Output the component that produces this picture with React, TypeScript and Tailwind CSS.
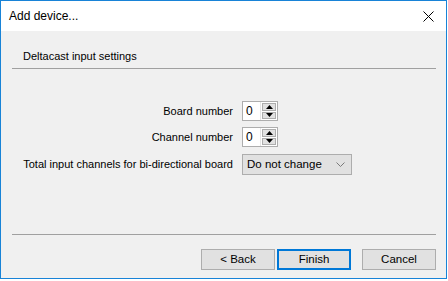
const FONT = { fontFamily: '"Segoe UI", "Liberation Sans", Arial, sans-serif' };

function SpinBox({ value }: { value: string }) {
  return (
    <div className="flex h-[20px] w-[36px] border border-[#adadad] bg-white">
      <div className="flex w-[18px] items-center border-r border-[#e5e5e5] pl-[3px] text-[12px] leading-none text-black">
        {value}
      </div>
      <div className="flex flex-1 flex-col gap-[1px] p-[1px]">
        <div className="flex flex-1 items-center justify-center border border-[#adadad] bg-[#e1e1e1]">
          <svg width="7" height="4" viewBox="0 0 7 4">
            <path d="M3.5 0 L7 4 L0 4 Z" fill="#000" />
          </svg>
        </div>
        <div className="flex flex-1 items-center justify-center border border-[#adadad] bg-[#e1e1e1]">
          <svg width="7" height="4" viewBox="0 0 7 4">
            <path d="M0 0 L7 0 L3.5 4 Z" fill="#000" />
          </svg>
        </div>
      </div>
    </div>
  );
}

function Button({ label, primary }: { label: string; primary?: boolean }) {
  return (
    <button
      className={
        'h-[21px] w-[74px] bg-[#e1e1e1] text-[11.5px] leading-none text-black ' +
        (primary ? 'border-2 border-[#0078d7]' : 'border border-[#adadad]')
      }
    >
      {label}
    </button>
  );
}

export default function App() {
  return (
    <div className="h-[281px] w-[448px] bg-white" style={FONT}>
      <div className="flex h-[279px] w-[447px] flex-col border border-[#1883d7] bg-[#f0f0f0] text-[11px] text-black">
        {/* title bar */}
        <div className="flex h-[30px] items-center justify-between bg-white pl-[8px] pr-[9px]">
          <span className="text-[12px]">Add device...</span>
          <svg width="11" height="11" viewBox="0 0 11 11" className="mr-[3px]">
            <path d="M0.5 0.5 L10.5 10.5 M10.5 0.5 L0.5 10.5" stroke="#000" strokeWidth="1" />
          </svg>
        </div>

        {/* header */}
        <div className="ml-[11px] mr-[10px] border-b border-[#a0a0a0] pb-[4px] pl-[11px] pt-[17px] leading-[16px]">
          Deltacast input settings
        </div>

        {/* form */}
        <div className="mt-[32px] grid grid-cols-[232px_auto] items-center gap-x-[9px]">
          <span className="text-right leading-[20px]">Board number</span>
          <SpinBox value="0" />
          <span className="mt-[6px] text-right leading-[20px]">Channel number</span>
          <div className="mt-[6px]">
            <SpinBox value="0" />
          </div>
          <span className="mt-[7px] text-right leading-[21px]">Total input channels for bi-directional board</span>
          <div className="mt-[7px] flex h-[21px] w-[110px] items-center justify-between border border-[#adadad] bg-[#e1e1e1] pl-[4px] pr-[6px]">
            <span className="text-[11.5px]">Do not change</span>
            <svg width="9" height="5" viewBox="0 0 9 5">
              <path d="M0.5 0.5 L4.5 4.5 L8.5 0.5" stroke="#7a7a7a" strokeWidth="1" fill="none" />
            </svg>
          </div>
        </div>

        {/* footer */}
        <div className="mt-auto ml-[11px] mr-[10px] border-t border-[#a0a0a0] pb-[8px] pt-[14px]">
          <div className="flex justify-end">
            <Button label="< Back" />
            <div className="ml-[2px]">
              <Button label="Finish" primary />
            </div>
            <div className="ml-[11px]">
              <Button label="Cancel" />
            </div>
          </div>
        </div>
      </div>
    </div>
  );
}
